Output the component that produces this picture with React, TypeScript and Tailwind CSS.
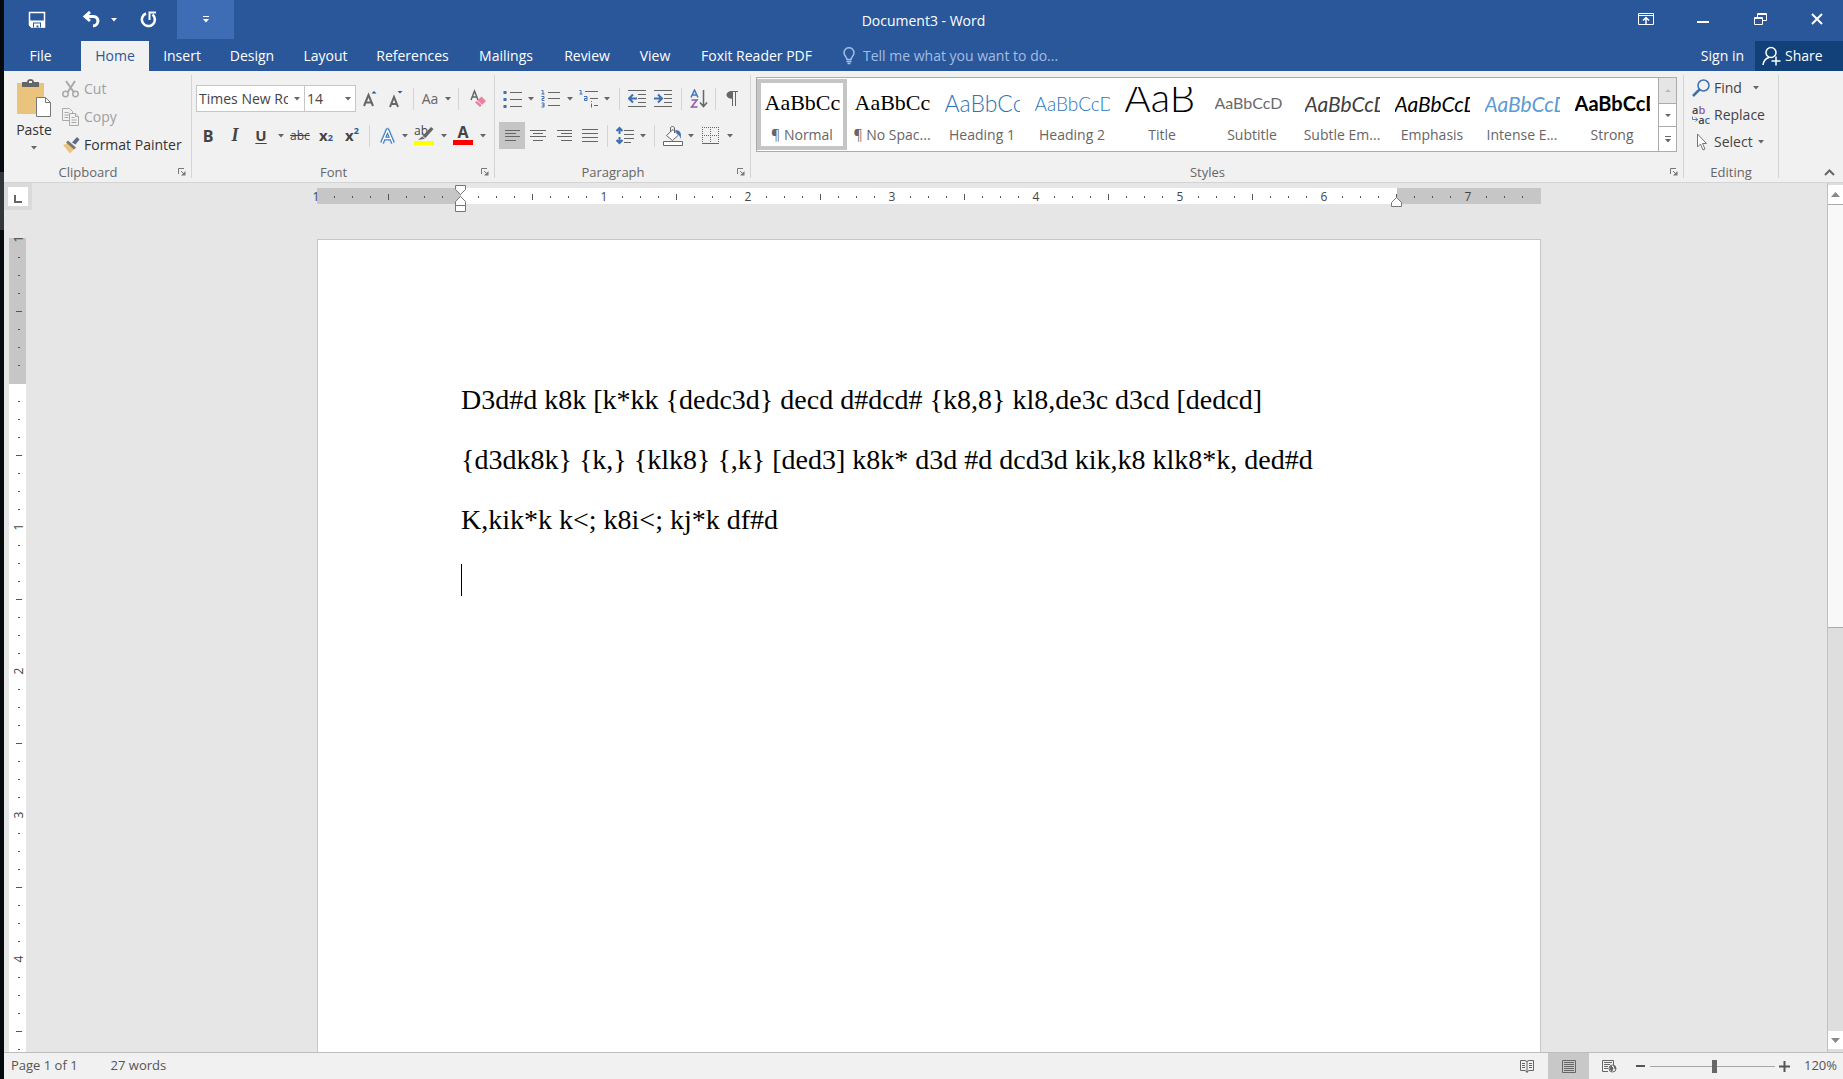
import type { ReactNode } from 'react';
import clsx from 'clsx';

const tabs = [
    { name: 'Insert', width: 'w-[66px]' },
    { name: 'Design', width: 'w-[74px]' },
    { name: 'Layout', width: 'w-[73px]' },
    { name: 'References', width: 'w-[101px]' },
    { name: 'Mailings', width: 'w-[86px]' },
    { name: 'Review', width: 'w-[76px]' },
    { name: 'View', width: 'w-[60px]' },
    { name: 'Foxit Reader PDF', width: 'w-[143px]' },
];

const serif = "font-['Liberation_Serif',serif]";
const lato = 'font-[Lato,sans-serif]';

const styles = [
    { name: '¶ Normal', sample: 'AaBbCc', look: clsx(serif, 'text-[22px] text-black') },
    { name: '¶ No Spac...', sample: 'AaBbCc', look: clsx(serif, 'text-[22px] text-black') },
    { name: 'Heading 1', sample: 'AaBbCc', look: clsx(lato, 'text-[23px] font-light text-[#2e74b5]') },
    { name: 'Heading 2', sample: 'AaBbCcD', look: clsx(lato, 'text-[19px] font-light text-[#2e74b5]') },
    { name: 'Title', sample: 'AaB', look: clsx(lato, 'pb-3 text-[40px] font-light text-black') },
    { name: 'Subtitle', sample: 'AaBbCcD', look: clsx(lato, 'text-[16px] text-[#6a6a6a]') },
    { name: 'Subtle Em...', sample: 'AaBbCcD', look: clsx(lato, 'text-[21px] italic text-[#404040]') },
    { name: 'Emphasis', sample: 'AaBbCcD', look: clsx(lato, 'text-[21px] italic text-black') },
    { name: 'Intense E...', sample: 'AaBbCcD', look: clsx(lato, 'text-[21px] italic text-[#5b9bd5]') },
    { name: 'Strong', sample: 'AaBbCcD', look: clsx(lato, 'text-[20px] font-bold text-black') },
];

function Caret({ className = 'text-[#666]' }: { className?: string }) {
    return (
        <svg width="8" height="4" viewBox="0 0 8 4" className={clsx('shrink-0', className)}>
            <path d="M1 0h6L4 3.5z" fill="currentColor" />
        </svg>
    );
}

function Tool({
    label,
    className,
    children,
}: {
    label: string;
    className: string;
    children: ReactNode;
}) {
    return (
        <button
            type="button"
            aria-label={label}
            className={clsx('flex h-[27px] shrink-0 items-center justify-center', className)}
        >
            {children}
        </button>
    );
}

function Divider({ className }: { className: string }) {
    return (
        <div className={clsx('flex h-[22px] shrink-0 justify-center', className)}>
            <div className="w-px bg-[#d4d4d4]" />
        </div>
    );
}

function Group({
    title,
    launcher = true,
    className,
    children,
}: {
    title: string;
    launcher?: boolean;
    className: string;
    children: ReactNode;
}) {
    return (
        <section className={clsx('my-1 flex flex-col border-r border-[#d4d4d4]', className)}>
            <div className="min-h-0 flex-1">{children}</div>
            <div className="flex h-3 items-center text-[13px] leading-3 text-[#666]">
                <span className="flex-1 text-center">{title}</span>
                {launcher && (
                    <button type="button" aria-label={`${title} settings`} className="w-[19px] pl-1.5">
                        <svg width="8" height="8" viewBox="0 0 8 8" fill="none" stroke="#777">
                            <path d="M.5 6V.5H6M3 3l3 3" />
                            <path d="M7.5 3v4.5H3z" fill="#777" stroke="none" />
                        </svg>
                    </button>
                )}
            </div>
        </section>
    );
}

function TitleBar() {
    return (
        <header className="grid h-[41px] grid-cols-[1fr_auto_1fr] items-start text-white">
            <div className="flex h-[39px] items-center">
                <button type="button" aria-label="Save" className="ml-6">
                    <svg width="18" height="18" viewBox="0 0 18 18" fill="none" stroke="#fff">
                        <path d="M1.5 1.5h15v14.500h-13l-2-2z" strokeWidth="1.500" />
                        <path d="M1 9.500h16v7H3.500L1 14z" fill="#fff" stroke="none" />
                        <path d="M5 11.500h8v5H5z" fill="#2a579a" stroke="none" />
                        <path d="M6 12.500h6v4h-1.500v-2h-2v2H6z" fill="#fff" stroke="none" />
                    </svg>
                </button>
                <button type="button" aria-label="Undo" className="ml-9">
                    <svg width="18" height="17" viewBox="0 0 18 17" fill="none" stroke="#fff" strokeWidth="3">
                        <path d="M8 1L3 5.500 8 10M3 5.500h8.500c6 0 6 9-.5 9.500" />
                    </svg>
                </button>
                <button type="button" aria-label="Undo history" className="ml-2.5">
                    <Caret className="text-white" />
                </button>
                <button type="button" aria-label="Repeat" className="ml-[22px]">
                    <svg width="17" height="17" viewBox="0 0 17 17" fill="none" stroke="#fff" strokeWidth="2.500">
                        <path d="M6 2.500a6.500 6.500 0 1 0 6.500 1" />
                        <path d="M9.500 9V1.500H16" strokeWidth="2" />
                    </svg>
                </button>
                <button
                    type="button"
                    aria-label="Customize quick access"
                    className="ml-5 flex h-[39px] w-[57px] items-center justify-center bg-[#3e6db5]"
                >
                    <svg width="6" height="7" viewBox="0 0 6 7" fill="#fff">
                        <path d="M0 0h6v1H0zM0 3h6L3 6.500z" />
                    </svg>
                </button>
            </div>
            <h1 className="text-[14px] leading-[41px]">Document3 - Word</h1>
            <div className="flex h-[38px] items-center justify-end">
                <button type="button" aria-label="Ribbon display options" className="mr-[43px]">
                    <svg width="16" height="12" viewBox="0 0 16 12" fill="none" stroke="#fff">
                        <path d="M.5.5h15v11H.5zM.5 2.500h15" />
                        <path d="M8 11V5M5 7.500L8 4.500l3 3" strokeWidth="1.500" />
                    </svg>
                </button>
                <button type="button" aria-label="Minimize" className="mr-[45px] pt-1.5">
                    <div className="h-0.5 w-3 bg-white" />
                </button>
                <button type="button" aria-label="Restore" className="mr-11">
                    <svg width="13" height="12" viewBox="0 0 13 12" fill="none" stroke="#fff">
                        <path d="M.5 4.500h8v7h-8zM.5 5.500h8M3.500 4V.5h9v7H9M3.500 1.500h9" />
                    </svg>
                </button>
                <button type="button" aria-label="Close" className="mr-5">
                    <svg width="12" height="12" viewBox="0 0 12 12" stroke="#fff" strokeWidth="2">
                        <path d="M1 1l10 10M11 1L1 11" />
                    </svg>
                </button>
            </div>
        </header>
    );
}

function TabBar() {
    return (
        <nav className="flex h-[30px] text-[14px] leading-[30px] text-white">
            <a href="#file" className="w-[77px] pr-1 text-center">
                File
            </a>
            <a href="#home" className="w-[68px] bg-[#f1f1f1] text-center text-[#2a579a]">
                Home
            </a>
            {tabs.map((tab) => (
                <a key={tab.name} href="#tab" className={clsx('text-center whitespace-nowrap', tab.width)}>
                    {tab.name}
                </a>
            ))}
            <label className="ml-[15px] flex flex-1 items-center gap-2">
                <svg width="12" height="18" viewBox="0 0 12 18" fill="none" stroke="#a3bde3" strokeWidth="1.500">
                    <path d="M4 12.500C4 10 1 9 1 5.700a5 5 0 0 1 10 0C11 9 8 10 8 12.500z" />
                    <path d="M3.500 14.500h5M4.500 16.500h3" />
                </svg>
                <input
                    aria-label="Tell me what you want to do"
                    placeholder="Tell me what you want to do..."
                    className="w-60 bg-transparent placeholder:text-[#a3bde3]"
                />
            </label>
            <a href="#signin" className="mr-[11px]">
                Sign in
            </a>
            <button type="button" className="flex w-[88px] items-center gap-1 bg-[#124078] pl-[7px]">
                <svg width="19" height="20" viewBox="0 0 19 20" fill="none" stroke="#fff" strokeWidth="1.500">
                    <circle cx="9" cy="6.500" r="5" />
                    <path d="M1 19c.5-4 2.500-6.500 6-7.500M14 10.500v9M9.500 15h9" />
                </svg>
                Share
            </button>
        </nav>
    );
}

function ClipboardGroup() {
    return (
        <Group title="Clipboard" className="w-[188px]">
            <div className="flex text-[14px] leading-5 text-[#333]">
                <button type="button" className="flex w-14 flex-col items-center pt-1 pl-1">
                    <svg width="36" height="39" viewBox="0 0 36 39">
                        <path d="M1 4h27v31H1z" fill="#eac37c" />
                        <path d="M6 3h5c0-4 7-4 7 0h5v5H6z" fill="#666" />
                        <path d="M13 2h3v2h-3z" fill="#f1f1f1" />
                        <path d="M20.500 18.500h9l5 5v14h-14z" fill="#fff" stroke="#777" />
                        <path d="M29.500 18.500v5h5" fill="none" stroke="#777" />
                    </svg>
                    <span className="mt-0.5">Paste</span>
                    <span className="pt-1.5">
                        <Caret />
                    </span>
                </button>
                <div className="flex flex-col">
                    <button type="button" className="flex h-7 items-center gap-1 pl-0.5 text-[#a0a0a0]">
                        <svg width="18" height="18" viewBox="0 0 18 18" fill="none" stroke="#a9a9a9" strokeWidth="1.500">
                            <path d="M4 1l8 11.500M13 1L5.500 12.500" strokeWidth="2" />
                            <circle cx="3.500" cy="14" r="2.700" />
                            <circle cx="13.500" cy="14" r="2.700" />
                        </svg>
                        Cut
                    </button>
                    <button type="button" className="flex h-7 items-center gap-1 pl-0.5 text-[#a0a0a0]">
                        <svg width="18" height="18" viewBox="0 0 18 18" fill="#f1f1f1" stroke="#a9a9a9">
                            <path d="M.5.5h7l3 3v9H.5z" />
                            <path d="M2.500 4.500h4M2.500 7h5M2.500 9.500h4" />
                            <path d="M7.500 5.500h6l3 3v9h-9z" />
                            <path d="M13.500 5.500v3h3M9.500 9.500h3M9.500 12h5M9.500 14.500h5" />
                        </svg>
                        Copy
                    </button>
                    <button type="button" className="flex h-7 items-center gap-1 pl-0.5 whitespace-nowrap">
                        <svg width="18" height="17" viewBox="0 0 18 17">
                            <path d="M1 8l6-2 5 6-4 4.500z" fill="#eac37c" />
                            <path d="M6 3.500l8 7-2 2-8-7z" fill="#777" />
                            <path d="M10 5.500L15 0l2.500 2.500-4 5z" fill="#5b6b8a" />
                        </svg>
                        Format Painter
                    </button>
                </div>
            </div>
        </Group>
    );
}

function FontGroup() {
    return (
        <Group title="Font" className="w-[303px]">
            <div className="mt-2.5 ml-1 flex items-center">
                <div className="relative">
                    <select
                        aria-label="Font name"
                        className="block h-[27px] w-[109px] appearance-none border border-[#c6c6c6] bg-white pr-4 pl-0.5 text-[14px] text-[#444]"
                    >
                        <option>Times New Roman</option>
                    </select>
                    <div className="absolute inset-y-0 right-1 flex items-center">
                        <Caret />
                    </div>
                </div>
                <div className="relative -ml-px">
                    <select
                        aria-label="Font size"
                        className="block h-[27px] w-[52px] appearance-none border border-[#c6c6c6] bg-white pl-0.5 text-[14px] text-[#444]"
                    >
                        <option>14</option>
                    </select>
                    <div className="absolute inset-y-0 right-1 flex items-center">
                        <Caret />
                    </div>
                </div>
                <Tool label="Grow font" className="w-7">
                    <svg width="15" height="18" viewBox="0 0 15 18" fill="none" stroke="#666" strokeWidth="2">
                        <path d="M1 16L5.500 5 10 16M3 12.500h5.500" />
                        <path d="M8.500 3.500h5L11 1z" fill="#2a579a" stroke="none" />
                    </svg>
                </Tool>
                <Tool label="Shrink font" className="w-6">
                    <svg width="15" height="18" viewBox="0 0 15 18" fill="none" stroke="#666" strokeWidth="2">
                        <path d="M1 17L5 7l4 10M3 14h4.500" />
                        <path d="M8.500 1h5L11 3.500z" fill="#2a579a" stroke="none" />
                    </svg>
                </Tool>
                <Divider className="w-2.5" />
                <Tool label="Change case" className="w-6 text-[14px] text-[#666]">
                    Aa
                </Tool>
                <Tool label="Case options" className="w-[11px]">
                    <Caret />
                </Tool>
                <Divider className="w-[11px]" />
                <Tool label="Clear formatting" className="w-7">
                    <svg width="17" height="19" viewBox="0 0 17 19" fill="none">
                        <path d="M1 11L4.500 2 8 11M2.500 8h4" stroke="#666" strokeWidth="1.500" />
                        <path d="M11.500 7.500L16 12l-6 6-5-4.500z" fill="#e8839b" />
                        <path d="M7 11.500l5 4.500" stroke="#f1f1f1" />
                    </svg>
                </Tool>
            </div>
            <div className="mt-2.5 ml-[3px] flex items-center text-[#444]">
                <Tool label="Bold" className="w-[26px] text-[16px] font-bold">
                    B
                </Tool>
                <Tool label="Italic" className="w-7 font-['Liberation_Serif',serif] text-[18px] font-bold italic">
                    I
                </Tool>
                <Tool label="Underline" className="w-6 text-[15px] font-bold underline underline-offset-2">
                    U
                </Tool>
                <Tool label="Underline options" className="w-[15px]">
                    <Caret />
                </Tool>
                <Tool label="Strikethrough" className="w-6 text-[12px] line-through">
                    abc
                </Tool>
                <Tool label="Subscript" className="w-7 text-[15px] font-bold">
                    x<sub className="text-[9px] text-[#2a579a]">2</sub>
                </Tool>
                <Tool label="Superscript" className="w-6 text-[15px] font-bold">
                    x<sup className="text-[9px] text-[#2a579a]">2</sup>
                </Tool>
                <Divider className="w-[11px]" />
                <Tool label="Text effects" className="w-6">
                    <svg width="17" height="18" viewBox="0 0 17 18" strokeLinejoin="round" fill="none">
                        <path d="M3 16L8.500 3 14 16M5.500 11.500h6" stroke="#b4d0ee" strokeWidth="5" />
                        <path d="M3 16L8.500 3 14 16M5.500 11.500h6" stroke="#3f78b8" strokeWidth="3.500" />
                        <path d="M3 16L8.500 3 14 16M5.500 11.500h6" stroke="#fff" strokeWidth="1.500" />
                    </svg>
                </Tool>
                <Tool label="Text effect options" className="w-[11px]">
                    <Caret />
                </Tool>
                <Tool label="Highlight" className="w-7">
                    <div className="relative flex h-[19px] w-5 flex-col justify-between">
                        <span className="text-left text-[12px] leading-[10px]">ab</span>
                        <div className="h-1 bg-[#ffff00]" />
                        <svg className="absolute inset-0" width="20" height="19" viewBox="0 0 20 19">
                            <path d="M17 1l2.500 2-8 9-3-2z" fill="#666" />
                            <path d="M8 10.500l3 2.200L4 14z" fill="#666" />
                        </svg>
                    </div>
                </Tool>
                <Tool label="Highlight colors" className="w-[11px]">
                    <Caret />
                </Tool>
                <Tool label="Font color" className="w-7">
                    <div className="flex h-[19px] w-5 flex-col items-center justify-between">
                        <span className="text-[16px] leading-[13px] font-bold">A</span>
                        <div className="h-[5px] w-full bg-[#f00]" />
                    </div>
                </Tool>
                <Tool label="Font colors" className="w-[11px]">
                    <Caret />
                </Tool>
            </div>
        </Group>
    );
}

function Lines({ d }: { d: string }) {
    return (
        <svg width="18" height="15" viewBox="0 0 18 15" stroke="#666" fill="none">
            <path d={d} />
        </svg>
    );
}

function ParagraphGroup() {
    return (
        <Group title="Paragraph" className="w-64">
            <div className="mt-2.5 ml-1 flex items-center">
                <Tool label="Bullets" className="w-[26px]">
                    <svg width="19" height="18" viewBox="0 0 19 18">
                        <path d="M7 2.500h12M7 9.500h12M7 16.500h12" stroke="#666" />
                        <path d="M.5 1h3v3h-3zM.5 8h3v3h-3zM.5 15h3v3h-3z" fill="#3f6fb0" />
                    </svg>
                </Tool>
                <Tool label="Bullet library" className="w-3">
                    <Caret />
                </Tool>
                <Tool label="Numbering" className="w-[27px]">
                    <svg width="19" height="19" viewBox="0 0 19 19" fill="none">
                        <path d="M7 3.500h12M7 9.500h12M7 16.500h12" stroke="#666" />
                        <path
                            d="M.5 1.500H2V5M.5 5h3M.5 7.500H3v2H1v2h2.500M.5 14H3v4H.5M1 16h2"
                            stroke="#3f6fb0"
                        />
                    </svg>
                </Tool>
                <Tool label="Numbering library" className="w-[11px]">
                    <Caret />
                </Tool>
                <Tool label="Multilevel list" className="w-[26px]">
                    <svg width="19" height="19" viewBox="0 0 19 19" fill="none">
                        <path d="M6 2.500h13M11 9.500h8M15 16.500h4" stroke="#666" />
                        <path
                            d="M.5 1.500H2V5M.5 5h3M5 7.500h3v4H5.500V9.500H8M12.500 14.500v4M12.500 12v1"
                            stroke="#3f6fb0"
                        />
                    </svg>
                </Tool>
                <Tool label="List library" className="w-3">
                    <Caret />
                </Tool>
                <Divider className="w-3" />
                <Tool label="Decrease indent" className="w-6">
                    <svg width="18" height="17" viewBox="0 0 18 17" fill="none">
                        <path d="M0 .5h18M10 4.500h8M10 8.500h8M10 12.500h8M0 16.500h18" stroke="#666" />
                        <path d="M9 8.500H2M5 4.500l-4 4 4 4" stroke="#3f6fb0" strokeWidth="2" />
                    </svg>
                </Tool>
                <Tool label="Increase indent" className="w-7">
                    <svg width="18" height="17" viewBox="0 0 18 17" fill="none">
                        <path d="M0 .5h18M10 4.500h8M10 8.500h8M10 12.500h8M0 16.500h18" stroke="#666" />
                        <path d="M0 8.500h7M4 4.500l4 4-4 4" stroke="#3f6fb0" strokeWidth="2" />
                    </svg>
                </Tool>
                <Divider className="w-2" />
                <Tool label="Sort" className="w-7">
                    <svg width="18" height="19" viewBox="0 0 18 19" fill="none" strokeWidth="1.500">
                        <path d="M1 8.500L4.500 1 8 8.500M2.500 6h4" stroke="#3f78b8" />
                        <path d="M1.500 11H7l-5.500 7h6" stroke="#8e5ba6" />
                        <path d="M13.500 1v16M10 13.500l3.500 4 3.500-4" stroke="#666" />
                    </svg>
                </Tool>
                <Divider className="w-1" />
                <Tool label="Show marks" className="w-[30px]">
                    <svg width="12" height="15" viewBox="0 0 12 15" fill="none" stroke="#666">
                        <path d="M5.500.5H12M6.500 1v14M9.500 1v14" />
                        <path d="M7 0v8C-1.500 8-1.500 0 6 0z" fill="#666" stroke="none" />
                    </svg>
                </Tool>
            </div>
            <div className="mt-2.5 ml-1 flex items-center">
                <Tool label="Align left" className="w-[26px] bg-[#c5c5c5]">
                    <Lines d="M2 2.500h15M2 5.500h11M2 8.500h15M2 12.500h11" />
                </Tool>
                <Tool label="Center" className="w-[26px]">
                    <Lines d="M1 2.500h16M4 5.500h10M1 8.500h16M4 12.500h10" />
                </Tool>
                <Tool label="Align right" className="w-[26px]">
                    <Lines d="M2 2.500h15M6 5.500h11M2 8.500h15M6 12.500h11" />
                </Tool>
                <Tool label="Justify" className="w-[26px]">
                    <Lines d="M1 1.500h16M1 5.500h16M1 9.500h16M1 13.500h16" />
                </Tool>
                <Divider className="w-2" />
                <Tool label="Line spacing" className="w-7">
                    <svg width="18" height="19" viewBox="0 0 18 19" fill="none">
                        <path d="M8 4.500h10M8 8.500h10M8 12.500h10M8 16.500h7" stroke="#666" />
                        <path d="M3.500 2v6M3.500 11v6M.5 5l3-3 3 3M.5 14l3 3 3-3" stroke="#3f6fb0" strokeWidth="2" />
                    </svg>
                </Tool>
                <Tool label="Spacing options" className="w-2">
                    <Caret />
                </Tool>
                <Divider className="w-3.5" />
                <Tool label="Shading" className="w-6">
                    <svg width="20" height="20" viewBox="0 0 20 20" fill="none" stroke="#666">
                        <path d="M3.500 9.500L10 3.500l5.500 5.500-6 5.500z" fill="#fff" />
                        <path d="M7.500 6V2c0-2 4-2 4 0v5" />
                        <path d="M12 4c5 0 7 3 5.500 9-.5-3-2-5-3-5z" fill="#3f6fb0" stroke="none" />
                        <path d="M.5 15.500h19v4H.5z" fill="#fff" />
                    </svg>
                </Tool>
                <Tool label="Shading colors" className="w-3">
                    <Caret />
                </Tool>
                <Tool label="Borders" className="w-[27px]">
                    <svg width="17" height="17" viewBox="0 0 17 17" stroke="#666" fill="none">
                        <path d="M0 .5h17M.5 0v17M16.500 0v17M8.500 0v17M0 8.500h17" strokeDasharray="1 1" />
                        <path d="M0 16.500h17" />
                    </svg>
                </Tool>
                <Tool label="Border options" className="w-3">
                    <Caret />
                </Tool>
            </div>
        </Group>
    );
}

function StylesGroup() {
    return (
        <Group title="Styles" className="min-w-0 flex-1">
            <div className="mt-0.5 mr-1.5 ml-[5px] flex h-[75px] border border-[#ababab] bg-white">
                <div className="flex min-w-0 flex-1 overflow-hidden">
                    {styles.map((style, i) => (
                        <button
                            key={style.name}
                            type="button"
                            className={clsx(
                                'my-px flex h-[71px] w-[90px] shrink-0 flex-col items-center border-4 pt-1',
                                i === 0 ? 'border-[#c5c5c5]' : 'border-transparent',
                            )}
                        >
                            <span
                                className={clsx(
                                    'flex h-8 w-[75px] shrink-0 items-center overflow-hidden leading-none whitespace-nowrap',
                                    style.look,
                                )}
                            >
                                {style.sample}
                            </span>
                            <span className="mt-[5px] text-[14px] leading-[22px] whitespace-nowrap text-[#666]">
                                {style.name}
                            </span>
                        </button>
                    ))}
                </div>
                <div className="flex w-[18px] flex-col divide-y divide-[#ababab] border-l border-[#ababab]">
                    <button
                        type="button"
                        aria-label="Previous styles"
                        className="flex h-[26px] items-center justify-center bg-[#e5e5e5]"
                    >
                        <svg width="6" height="3" viewBox="0 0 6 3">
                            <path d="M0 3h6L3 0z" fill="#bbb" />
                        </svg>
                    </button>
                    <button type="button" aria-label="Next styles" className="flex h-[23px] items-center justify-center">
                        <svg width="6" height="3" viewBox="0 0 6 3">
                            <path d="M0 0h6L3 3z" fill="#666" />
                        </svg>
                    </button>
                    <button type="button" aria-label="All styles" className="flex flex-1 items-center justify-center">
                        <svg width="6" height="7" viewBox="0 0 6 7" fill="#666">
                            <path d="M0 0h6v1H0zM0 3h6L3 6.500z" />
                        </svg>
                    </button>
                </div>
            </div>
        </Group>
    );
}

function EditingGroup() {
    return (
        <Group title="Editing" launcher={false} className="w-[95px]">
            <div className="flex flex-col pl-2 text-[14px] text-[#444]">
                <button type="button" className="flex h-[25px] items-center gap-1">
                    <svg width="18" height="18" viewBox="0 0 18 18" fill="none" stroke="#3f6fb0" strokeWidth="1.500">
                        <circle cx="11.500" cy="6.500" r="5.500" />
                        <path d="M7.500 10.500L1 17" strokeWidth="2.500" />
                    </svg>
                    Find
                    <span className="pl-1.5">
                        <Caret />
                    </span>
                </button>
                <button type="button" className="flex h-[29px] items-center gap-1">
                    <span className="flex w-[18px] flex-col text-left text-[11px] leading-[10px] font-semibold">
                        <span>
                            a<span className="text-[#8e5ba6]">b</span>
                        </span>
                        <span className="flex items-center">
                            <svg width="7" height="7" viewBox="0 0 7 7" fill="none" stroke="#3f6fb0">
                                <path d="M.5 0v3.500h6M4 1l2.500 2.500L4 6" />
                            </svg>
                            a<span className="text-[#3f6fb0]">c</span>
                        </span>
                    </span>
                    Replace
                </button>
                <button type="button" className="flex h-[25px] items-center gap-1">
                    <span className="w-[18px] pl-1">
                        <svg width="12" height="18" viewBox="0 0 12 18" fill="#fff" stroke="#777">
                            <path d="M1.500 1v13l3-3 2.500 6 2-1-2.500-5.500h4z" />
                        </svg>
                    </span>
                    Select
                    <Caret />
                </button>
            </div>
        </Group>
    );
}

function Ticks({ count, vertical = false }: { count: number; vertical?: boolean }) {
    return Array.from({ length: count }, (_, i) => {
        const inch = Math.abs(i / 8 - 1);
        let mark = <span className={clsx('bg-[#555]', vertical ? 'h-px w-0.5' : 'h-0.5 w-px')} />;
        if (i % 8 === 0) {
            mark = <span className={clsx(vertical && '-rotate-90')}>{inch === 0 ? '' : inch}</span>;
        } else if (i % 4 === 0) {
            mark = <span className={clsx('bg-[#555]', vertical ? 'h-px w-1.5' : 'h-1.5 w-px')} />;
        }
        return (
            <div
                key={i}
                className={clsx(
                    'flex shrink-0 items-center justify-center text-[12px] leading-none text-[#444]',
                    vertical ? 'h-[18px] w-full pl-[3px]' : 'h-full w-[18px] pt-px',
                )}
            >
                {mark}
            </div>
        );
    });
}

function Workspace() {
    return (
        <main className="flex min-h-0 flex-1 overflow-hidden bg-[#e6e6e6]">
            <div className="flex w-[27px] shrink-0 flex-col">
                <button
                    type="button"
                    aria-label="Tab stop"
                    className="flex h-[27px] w-7 shrink-0 items-center justify-center border-4 border-[#dadada] bg-white pt-1"
                >
                    <svg width="8" height="8" viewBox="0 0 8 8" fill="none" stroke="#666" strokeWidth="2">
                        <path d="M1 0v7h7" />
                    </svg>
                </button>
                <div className="mt-7 ml-[5px] min-h-0 w-[17px] flex-1 bg-[linear-gradient(180deg,#c6c6c6_146px,#fff_146px)]">
                    <div className="-mt-2">
                        <Ticks count={46} vertical />
                    </div>
                </div>
            </div>
            <div className="flex min-w-0 flex-1 flex-col items-center">
                <div className="relative mt-[5px] h-4 w-[1224px] shrink-0 bg-[linear-gradient(90deg,#c6c6c6_144px,#fff_144px_1080px,#c6c6c6_1080px)]">
                    <div className="-ml-2.5 flex h-full">
                        <Ticks count={68} />
                    </div>
                    <svg
                        className="absolute -top-1 left-[138px]"
                        width="12"
                        height="30"
                        viewBox="0 0 12 30"
                        fill="#fff"
                        stroke="#777"
                    >
                        <path d="M.5 1.500h10v4l-5 5-5-5z" />
                        <path d="M5.500 12.500l5 5v10H.5v-10zM.5 21.500h10" />
                    </svg>
                    <svg
                        className="absolute top-2 left-[1074px]"
                        width="12"
                        height="12"
                        viewBox="0 0 12 12"
                        fill="#fff"
                        stroke="#777"
                    >
                        <path d="M5.500 1.500l5 5v4H.5v-4z" />
                    </svg>
                </div>
                <div
                    role="textbox"
                    aria-label="Document"
                    className="mt-[35px] w-[1224px] flex-1 border border-b-0 border-[#c6c6c6] bg-white px-[143px] pt-[130px] font-['Liberation_Serif',serif] text-[28px] leading-[60px] text-black"
                >
                    <p>
                        D3d#d k8k [k*kk {'{dedc3d}'} decd d#dcd# {'{k8,8}'} kl8,de3c d3cd [dedcd]
                        <br />
                        {'{d3dk8k} {k,} {klk8} {,k}'} [ded3] k8k* d3d #d dcd3d kik,k8 klk8*k, ded#d
                    </p>
                    <p>K,kik*k k&lt;; k8i&lt;; kj*k df#d</p>
                    <div className="mt-3.5 h-8 w-px bg-black" />
                </div>
            </div>
            <div className="flex w-4 shrink-0 flex-col border-l border-[#c0c0c0] bg-[#dedede] pt-0.5">
                <button type="button" aria-label="Scroll up" className="flex h-[19px] items-center justify-center bg-white">
                    <svg width="9" height="5" viewBox="0 0 9 5">
                        <path d="M0 5h9L4.500 0z" fill="#888" />
                    </svg>
                </button>
                <div className="h-[424px] border-y border-[#ababab] bg-[#f8f8f8]" />
                <div className="flex-1" />
                <button
                    type="button"
                    aria-label="Scroll down"
                    className="mb-[3px] flex h-[18px] items-center justify-center bg-white"
                >
                    <svg width="9" height="5" viewBox="0 0 9 5">
                        <path d="M0 0h9L4.500 5z" fill="#888" />
                    </svg>
                </button>
            </div>
        </main>
    );
}

function StatusBar() {
    return (
        <footer className="flex h-[27px] shrink-0 items-center border-t border-[#bdbdbd] bg-[#f1f1f1] text-[13px] text-[#555]">
            <span className="ml-[7px]">Page 1 of 1</span>
            <span className="ml-[33px]">27 words</span>
            <div className="ml-auto flex h-full items-center">
                <button type="button" aria-label="Read mode" className="mr-3.5">
                    <svg width="14" height="13" viewBox="0 0 14 13" fill="none" stroke="#666">
                        <path d="M.5.5H5l2 1 2-1h4.500v10H9l-2 1.500-2-1.500H.5zM7 1v12M2 3.500h3M2 5.500h3M2 7.500h3M9 3.500h3M9 5.500h3M9 7.500h3" />
                    </svg>
                </button>
                <button
                    type="button"
                    aria-label="Print layout"
                    className="flex h-full w-[41px] items-center justify-center bg-[#c8c8c8]"
                >
                    <svg width="14" height="13" viewBox="0 0 14 13" fill="none" stroke="#666">
                        <path d="M.5.5h13v12H.5zM2 2.500h10M2 4.500h10M2 6.500h10M2 8.500h10M2 10.500h10" />
                    </svg>
                </button>
                <button type="button" aria-label="Web layout" className="mr-[19px] ml-[13px]">
                    <svg width="15" height="13" viewBox="0 0 15 13" fill="none" stroke="#666">
                        <path d="M6 11.500H.5V.5h11V5M2 2.500h8M2 4.500h6M2 6.500h4M2 8.500h4" />
                        <circle cx="10.500" cy="8.500" r="3.500" fill="#f1f1f1" />
                        <path d="M9 6l2 2-1 3-2-2zM12 6l2 2-1 1z" fill="#666" />
                    </svg>
                </button>
                <button type="button" aria-label="Zoom out" className="mr-[5px]">
                    <div className="h-0.5 w-[9px] bg-[#555]" />
                </button>
                <input
                    type="range"
                    aria-label="Zoom"
                    min={0}
                    max={100}
                    defaultValue={52}
                    className="h-[13px] w-[125px] appearance-none bg-[linear-gradient(#a6a6a6,#a6a6a6)] bg-[length:100%_1px] bg-center bg-no-repeat [&::-webkit-slider-thumb]:h-[13px] [&::-webkit-slider-thumb]:w-[5px] [&::-webkit-slider-thumb]:appearance-none [&::-webkit-slider-thumb]:bg-[#666]"
                />
                <button type="button" aria-label="Zoom in" className="ml-1">
                    <svg width="11" height="11" viewBox="0 0 11 11" stroke="#555" strokeWidth="2">
                        <path d="M0 5.500h11M5.500 0v11" />
                    </svg>
                </button>
                <span className="mr-1.5 w-[47px] text-right">120%</span>
            </div>
        </footer>
    );
}

export default function App() {
    return (
        <div className="flex h-screen overflow-hidden bg-[linear-gradient(180deg,#060a0e_172px,#333638_172px_230px,#060a0e_230px)] pl-1 font-['Open_Sans',sans-serif]">
            <div className="flex min-w-0 flex-1 flex-col bg-[#2a579a]">
                <TitleBar />
                <TabBar />
                <div className="flex h-28 shrink-0 border-b border-[#d4d4d4] bg-[#f1f1f1]">
                    <ClipboardGroup />
                    <FontGroup />
                    <ParagraphGroup />
                    <StylesGroup />
                    <EditingGroup />
                    <div className="flex w-16 items-end justify-end pr-2 pb-1.5">
                        <button type="button" aria-label="Collapse ribbon">
                            <svg width="11" height="7" viewBox="0 0 11 7" fill="none" stroke="#666" strokeWidth="2">
                                <path d="M1 6l4.500-4.500L10 6" />
                            </svg>
                        </button>
                    </div>
                </div>
                <Workspace />
                <StatusBar />
            </div>
        </div>
    );
}
